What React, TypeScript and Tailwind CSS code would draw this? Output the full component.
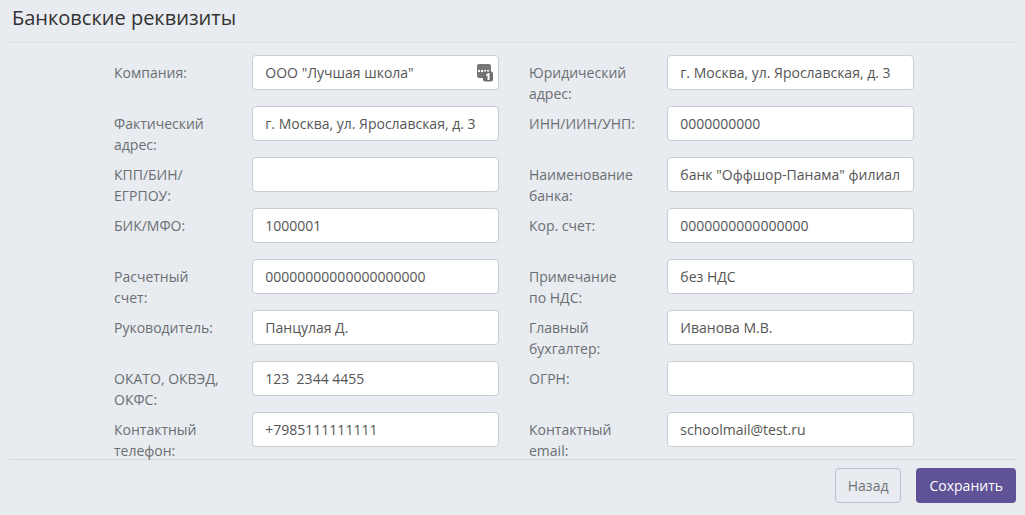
import React from 'react';

type FieldProps = {
  id: string;
  label: string;
  value: string;
  type?: string;
  autofill?: boolean;
};

const fields: FieldProps[] = [
  { id: 'company', label: 'Компания:', value: 'ООО "Лучшая школа"', autofill: true },
  { id: 'legal-address', label: 'Юридический адрес:', value: 'г. Москва, ул. Ярославская, д. 3' },
  { id: 'actual-address', label: 'Фактический адрес:', value: 'г. Москва, ул. Ярославская, д. 3' },
  { id: 'inn', label: 'ИНН/ИИН/УНП:', value: '0000000000' },
  { id: 'kpp', label: 'КПП/БИН/ЕГРПОУ:', value: '' },
  { id: 'bank', label: 'Наименование банка:', value: 'банк "Оффшор-Панама" филиал' },
  { id: 'bik', label: 'БИК/МФО:', value: '1000001' },
  { id: 'corr-account', label: 'Кор. счет:', value: '0000000000000000' },
  { id: 'account', label: 'Расчетный счет:', value: '00000000000000000000' },
  { id: 'vat', label: 'Примечание по НДС:', value: 'без НДС' },
  { id: 'director', label: 'Руководитель:', value: 'Панцулая Д.' },
  { id: 'accountant', label: 'Главный бухгалтер:', value: 'Иванова М.В.' },
  { id: 'okato', label: 'ОКАТО, ОКВЭД, ОКФС:', value: '123  2344 4455' },
  { id: 'ogrn', label: 'ОГРН:', value: '' },
  { id: 'phone', label: 'Контактный телефон:', value: '+7985111111111', type: 'tel' },
  { id: 'email', label: 'Контактный email:', value: 'schoolmail@test.ru', type: 'email' },
];

// Password manager badge inside the field
const AutofillIcon: React.FC = () => (
  <svg className="absolute right-5 top-2 w-[18px] h-[19px] pointer-events-none" viewBox="0 0 18 19" aria-hidden="true">
    <rect x="1" y="1" width="14" height="14" rx="2" fill="#777" />
    <path d="M2 7h2v2H2zM5 7h2v2H5zM8 7h2v2H8zM11 7h2v2h-2z" fill="#fff" />
    <rect x="7" y="8.5" width="10" height="10" rx="2" fill="#6f6f6f" />
    <path d="M10 11.7l2.2-1.6h1.3v7h-2v-4.8l-1.5.9z" fill="#fff" />
  </svg>
);

const Field: React.FC<FieldProps> = ({ id, label, value, type = 'text', autofill }) => (
  <div className="flex h-[51px]">
    <label htmlFor={id} className="w-1/3 px-[15px] pt-[7px] text-[#6b6f73]">
      {label}
    </label>
    <div className="relative w-2/3 px-[15px]">
      <input
        id={id}
        type={type}
        defaultValue={value}
        className="block w-full h-[35px] px-3 rounded-[4px] border border-[#c8cdd3] bg-white text-[#555] outline-none focus:border-[#5f5296]"
      />
      {autofill && <AutofillIcon />}
    </div>
  </div>
);

export default function App() {
  return (
    <main className="min-h-screen bg-[#e8ebf0] px-[9px] pb-3 font-['Open_Sans','Noto_Sans',sans-serif] text-[14px] leading-[21px]">
      <header className="h-[43px] border-b border-[#dcdfe5] px-[3px] pt-1">
        <h1 className="text-[20px] leading-7 text-[#333]">Банковские реквизиты</h1>
      </header>

      <form>
        <div className="h-[417px] border-b border-[#d5d8df] pl-[7px] pr-1 pt-3">
          <div className="mx-auto grid w-5/6 grid-cols-2">
            {fields.map((field) => (
              <Field key={field.id} {...field} />
            ))}
          </div>
        </div>

        <div className="flex justify-end gap-[15px] pt-2">
          <button type="button" className="h-[35px] px-3 rounded-[4px] border border-[#bcc0cb] text-[#6f7377] hover:bg-white">
            Назад
          </button>
          <button type="submit" className="h-[35px] px-[13px] rounded-[4px] bg-[#5f5296] text-white hover:bg-[#524685]">
            Сохранить
          </button>
        </div>
      </form>
    </main>
  );
}
